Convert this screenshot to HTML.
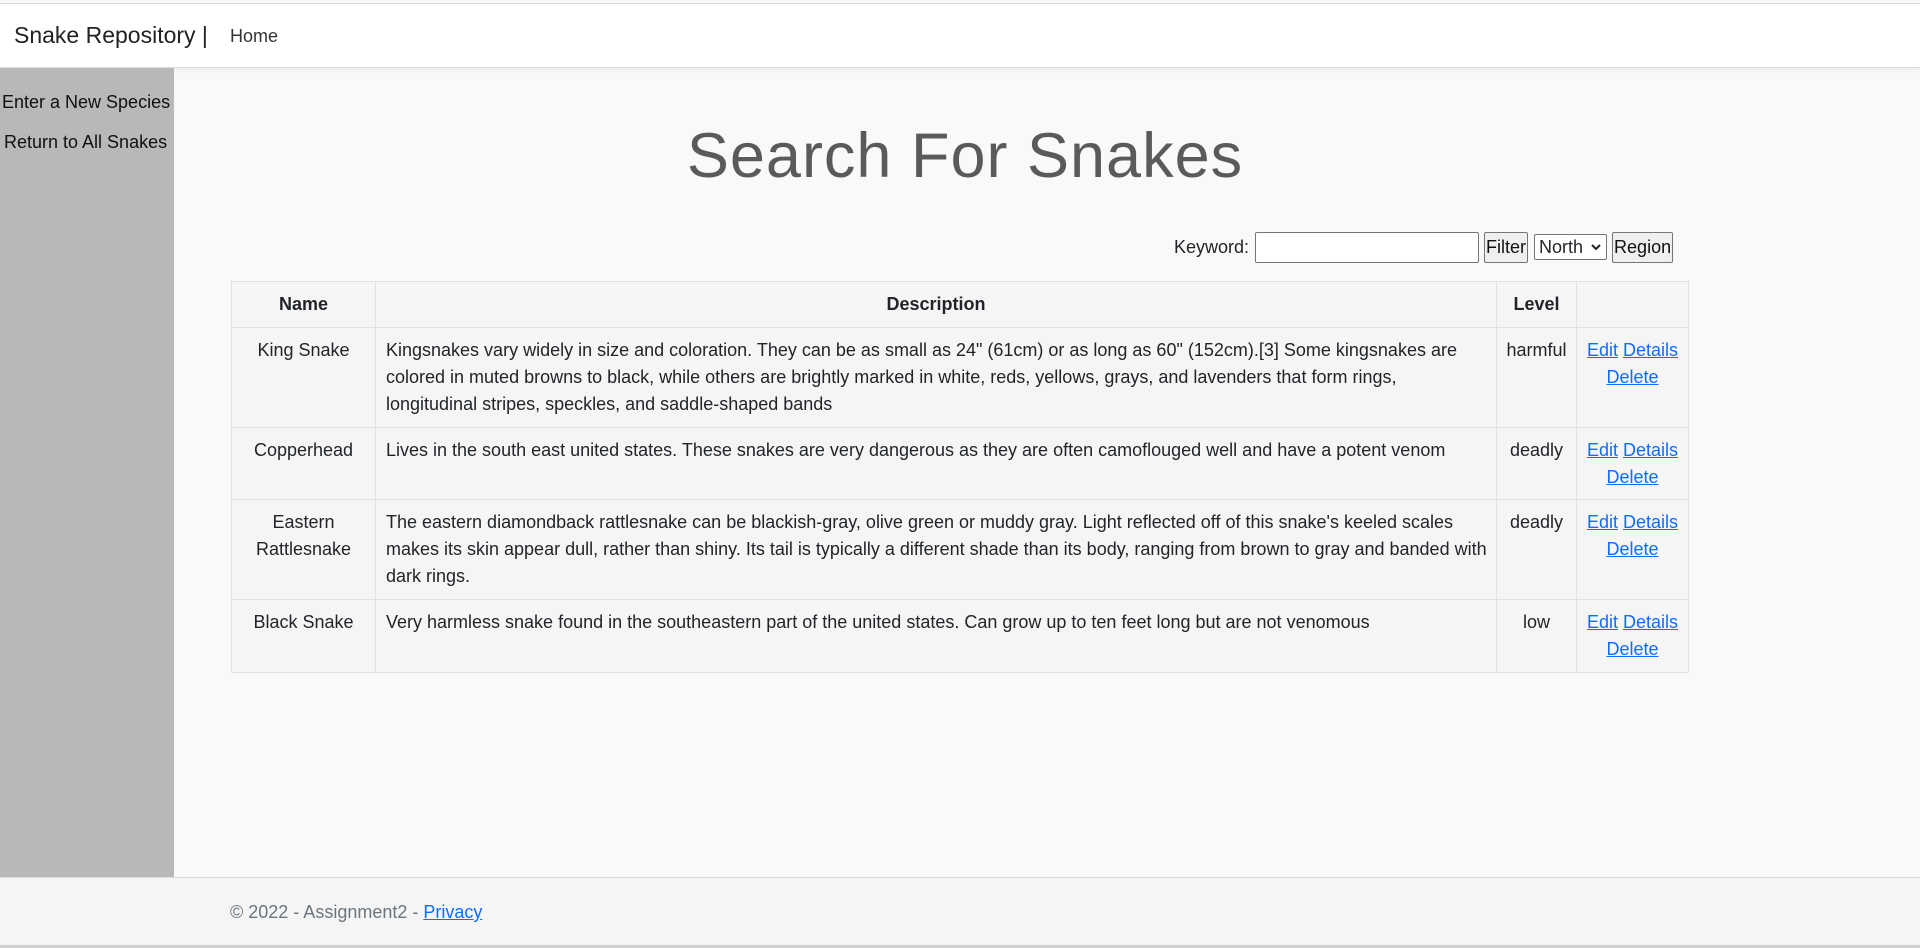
<!DOCTYPE html>
<html><head><meta charset="utf-8"><style>
*{box-sizing:border-box}
body{margin:0;width:1920px;height:948px;overflow:hidden;background:#f9f9f9;font-family:"Liberation Sans",Arial,sans-serif;color:#212529;position:relative}
.nav{position:absolute;top:3px;left:0;width:1920px;height:65px;background:#fff;border-top:1px solid #dcdcdc;border-bottom:1px solid #dcdcdc;box-shadow:0 2px 4px rgba(0,0,0,.05)}
.brand{position:absolute;left:14px;top:18px;font-size:23px;color:#222}
.home{position:absolute;left:230px;top:22px;font-size:18px;color:#333}
.side{position:absolute;left:0;top:68px;width:174px;height:809px;background:#b8b8b8;font-size:18px;color:#111}
.side div{position:absolute;white-space:nowrap}
h1{position:absolute;left:0;width:1930px;text-align:center;top:120px;margin:0;font-weight:normal;font-size:63px;color:#5a5a5a;letter-spacing:1px}
.filt{position:absolute;top:231px;left:1174px;font-size:18px;display:flex;align-items:center;height:32px}
.filt input{width:224px;height:31px;border:1px solid #767676;border-radius:2px;margin:0 5px 0 6px;background:#fff}
.btn{height:31px;border:1px solid #767676;background:#efefef;border-radius:2px;font-size:18px;padding:0 1px;line-height:29px;font-family:inherit;color:#111}
.sel{height:26px;border:1px solid #767676;border-radius:2px;background:#fff;font-size:18px;margin:0 5px 0 6px;padding:0 4px;line-height:24px;width:73px;display:flex;justify-content:space-between;align-items:center}
table{position:absolute;left:231px;top:281px;border-collapse:collapse;font-size:18px;width:1458px}
td,th{border:1px solid #dee2e6;padding:9px 8px 8px 10px;vertical-align:top;line-height:27px;background:#f5f5f5}
th{height:46px;padding:7px 10px;vertical-align:middle}
td.c{text-align:center;padding:9px 6px 8px}
td.a{text-align:center;white-space:nowrap;padding:9px 2px 8px}
a{color:#0d6efd;text-decoration:underline}
.foot{position:absolute;top:877px;left:0;width:1920px;height:68px;background:#f5f5f5;border-top:1px solid #dcdcdc}
.foot span{position:absolute;left:230px;top:24px;font-size:18px;color:#6c757d}
.strip{position:absolute;top:945px;left:0;width:1920px;height:3px;background:#d0d0d0}
</style></head><body>
<div class="nav"><div class="brand">Snake Repository |</div><div class="home">Home</div></div>
<div class="side"><div style="left:2px;top:24px">Enter a New Species</div><div style="left:4px;top:64px">Return to All Snakes</div></div>
<h1>Search For Snakes</h1>
<div class="filt">Keyword:<input><span class="btn">Filter</span><span class="sel">North <svg width="12" height="8" viewBox="0 0 12 8"><path d="M2 2l4 4 4-4" stroke="#222" stroke-width="2" fill="none"/></svg></span><span class="btn">Region</span></div>
<table>
<tr><th style="width:144px">Name</th><th style="width:1121px">Description</th><th style="width:80px">Level</th><th></th></tr>
<tr style="height:100px"><td class="c">King Snake</td><td>Kingsnakes vary widely in size and coloration. They can be as small as 24" (61cm) or as long as 60" (152cm).[3] Some kingsnakes are colored in muted browns to black, while others are brightly marked in white, reds, yellows, grays, and lavenders that form rings, longitudinal stripes, speckles, and saddle-shaped bands</td><td class="c">harmful</td><td class="a"><a>Edit</a> <a>Details</a><br><a>Delete</a></td></tr>
<tr style="height:72px"><td class="c">Copperhead</td><td>Lives in the south east united states. These snakes are very dangerous as they are often camoflouged well and have a potent venom</td><td class="c">deadly</td><td class="a"><a>Edit</a> <a>Details</a><br><a>Delete</a></td></tr>
<tr style="height:100px"><td class="c">Eastern Rattlesnake</td><td>The eastern diamondback rattlesnake can be blackish-gray, olive green or muddy gray. Light reflected off of this snake's keeled scales makes its skin appear dull, rather than shiny. Its tail is typically a different shade than its body, ranging from brown to gray and banded with dark rings.</td><td class="c">deadly</td><td class="a"><a>Edit</a> <a>Details</a><br><a>Delete</a></td></tr>
<tr style="height:73px"><td class="c">Black Snake</td><td>Very harmless snake found in the southeastern part of the united states. Can grow up to ten feet long but are not venomous</td><td class="c">low</td><td class="a"><a>Edit</a> <a>Details</a><br><a>Delete</a></td></tr>
</table>
<div class="foot"><span>© 2022 - Assignment2 - <a>Privacy</a></span></div>
<div class="strip"></div>
</body></html>
